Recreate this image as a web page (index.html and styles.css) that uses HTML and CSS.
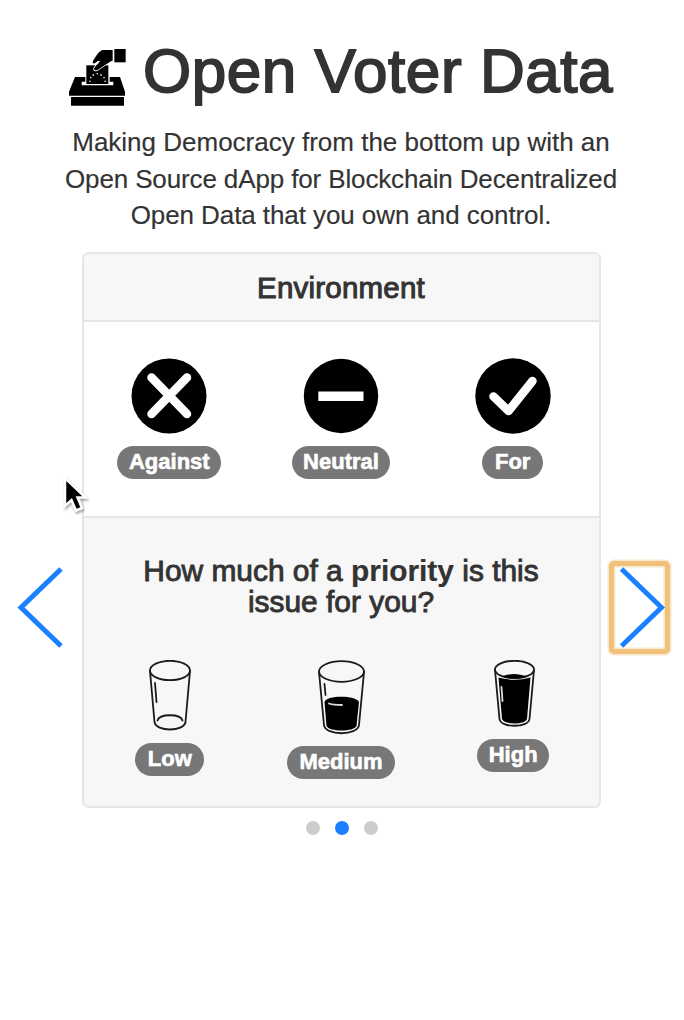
FILE: index.html
```
<!DOCTYPE html>
<html lang="en">
<head>
<meta charset="utf-8">
<title>Open Voter Data</title>
<link rel="stylesheet" href="styles.css">
</head>
<body>
<header class="masthead">
  <h1 class="title">
    <svg class="logo" viewBox="27 24 171 177" aria-hidden="true">
      <path d="M163 27h34v40h-34z"/>
      <path d="M45 111h31v14h-11v11h95v-11h-11v-14h31l15 44v12H27v-12zM33 171h159v26H33z"/>
      <path d="M79 76h66v56H79z"/>
      <path class="hand" d="M158 30h-31c-7 2-15 12-20 20-5 7-10 14-9 19 4 3 9 0 15-6h7c-3 7-18 18-18 24 1 5 7 5 12 2l27-18c6-3 9-8 17-9z"/>
      <path class="stars" d="M88 122h4v4h-4zM90 111h4v4h-4zM98 103h4v4h-4zM110 99h4v4h-4zM121 103h4v4h-4zM130 111h4v4h-4zM133 122h4v4h-4z"/>
    </svg>
    <span class="title-text">Open Voter Data</span>
  </h1>
  <p class="tagline"><span>Making Democracy from the bottom up with an</span><br><span class="tight">Open Source dApp for Blockchain Decentralized</span><br><span class="snug">Open Data that you own and control.</span></p>
</header>
<main class="carousel">
  <button class="nav prev" aria-label="Previous"><svg viewBox="0 0 52 84"><path d="M48 4 8 42.500 48 81"/></svg></button>
  <section class="card">
    <h2 class="card-head">Environment</h2>
    <div class="choices stance">
      <div class="choice"><svg width="76" height="76" viewBox="0 0 76 76"><circle cx="38" cy="38" r="37.500"/><path class="mark" d="M20.500 19.500 56 56M56 19.500 20.500 56"/></svg><span class="badge">Against</span></div>
      <div class="choice"><svg width="76" height="76" viewBox="0 0 76 76"><circle cx="38" cy="38" r="37.200"/><path class="dash" d="M15.300 33.500h45.200v9.500H15.300z"/></svg><span class="badge">Neutral</span></div>
      <div class="choice"><svg width="76" height="76" viewBox="0 0 76 76"><circle cx="38" cy="38" r="37.700"/><path class="mark" d="M18.500 38.500 33.500 53 57.500 23"/></svg><span class="badge wide">For</span></div>
    </div>
    <div class="card-foot">
      <h3 class="question">How much of a <b>priority</b> is this<br>issue for you?</h3>
      <div class="choices priority">
        <div class="choice low"><svg class="glass" width="42" height="71" viewBox="0 0 42 71"><ellipse cx="21" cy="10.500" rx="20" ry="9.700"/><path d="M1 11 5.500 62C7 72 35 72 36.500 62L41 11M8.500 60.500c2-7 23-7 25 0M6 23l1.500 19"/></svg><span class="badge wide">Low</span></div>
        <div class="choice medium"><svg class="glass" width="47" height="75" viewBox="0 0 47 75"><ellipse cx="23.500" cy="11.500" rx="22.500" ry="10.300"/><path d="M1 12 6 65C7 76 40 76 41 65L46 12M6.500 24l1 11"/><path class="liquid" d="M6.500 42C8 35 38 35 41 42L38.500 66C36 72 11 72 8.500 66z"/><path class="shine" d="M11 43.500c4 1.500 8 1.500 13 1.500"/></svg><span class="badge wide">Medium</span></div>
        <div class="choice high"><svg class="glass" width="41" height="67" viewBox="0 0 41 67"><ellipse cx="20.500" cy="9.500" rx="19.500" ry="8.700"/><path d="M1 10 5.500 59C6.500 68 34.500 68 35.500 59L40 10"/><path class="liquid" d="M4.500 17.500Q20.500 22 36.500 17.500L33 59C31 65 10 65 8 59zM8 16.500Q20.500 11.500 33 16.500 20.500 20 8 16.500z"/><path class="shine" d="M7.500 27l1 14"/></svg><span class="badge">High</span></div>
      </div>
    </div>
  </section>
  <button class="nav next" aria-label="Next"><svg viewBox="0 0 52 84"><path d="M8.500 4 48.500 42.500 8.500 81"/></svg></button>
</main>
<nav class="dots" aria-label="Slides"><i class="dot"></i><i class="dot active"></i><i class="dot"></i></nav>
<svg class="cursor" width="26" height="40" viewBox="0 0 26 40" aria-hidden="true"><path d="M3 3v28l6.500-6 4.500 10.500 6-2.500-4.500-10.500h8z"/></svg>
</body>
</html>
```
FILE: styles.css
```
* { box-sizing: border-box; }
body {
  margin: 0;
  min-height: 1020px;
  background: #fff;
  color: #333;
  font-family: "Liberation Sans", Arial, sans-serif;
  text-align: center;
}
.masthead { height: 252px; padding: 36px 2px 0 0; }
.title {
  display: flex;
  justify-content: center;
  gap: 17px;
  height: 72px;
  margin: 0;
  font-size: 62px;
  line-height: 70px;
  font-weight: 400;
  white-space: nowrap;
}
.logo { width: 57px; height: 59px; margin-top: 12px; }
.title-text { -webkit-text-stroke: 1.8px #333; letter-spacing: .55px; }
.hand { stroke: #fff; stroke-width: 5px; paint-order: stroke; }
.stars { fill: #fff; }
.tagline { margin: 16px 0 0; font-size: 26px; line-height: 36.5px; white-space: nowrap; -webkit-text-stroke: .15px #333; }
.tight { letter-spacing: -.13px; }
.snug { letter-spacing: -.08px; }
.carousel { display: flex; justify-content: space-between; padding: 0 14px 0 12px; }
.nav {
  width: 61px;
  height: 93px;
  margin-top: 309px;
  padding: 0;
  border: 5px solid transparent;
  border-radius: 5px;
  background: none;
}
.nav svg { display: block; width: 52px; height: 84px; margin-top: -1px; }
.nav path { fill: none; stroke: #1a80ff; stroke-width: 5; }
.prev svg { margin-left: -4px; }
.next { border-color: #f0c17b; box-shadow: 0 0 0 1.5px #fae6c9, inset 0 0 0 1.5px #fae6c9; }
.next svg { margin-left: -1px; }
.card {
  width: 519px;
  height: 556px;
  margin: 0;
  border: 2px solid #e6e6e6;
  border-radius: 7px;
  overflow: hidden;
}
.card-head {
  height: 68px;
  margin: 0;
  border-bottom: 2px solid #e6e6e6;
  background: #f7f7f7;
  font-size: 29.5px;
  font-weight: 400;
  line-height: 68px;
  letter-spacing: .2px;
  -webkit-text-stroke: 1px #333;
}
.choices { display: grid; grid-template-columns: repeat(3, 1fr); }
.choice { display: flex; flex-direction: column; align-items: center; }
.stance { height: 194px; padding-top: 36px; }
.mark { fill: none; stroke: #fff; stroke-width: 8.5; stroke-linecap: round; stroke-linejoin: round; }
.dash { fill: #fff; }
.badge {
  height: 33px;
  margin-top: 12px;
  padding: 0 11.5px;
  border-radius: 17px;
  background: #777;
  color: #fff;
  font-size: 22px;
  font-weight: 700;
  line-height: 32px;
  -webkit-text-stroke: .6px #fff;
}
.wide { padding: 0 12.5px; }
.card-foot { height: 290px; padding-top: 37px; border-top: 2px solid #e6e6e6; background: #f7f7f7; }
.question { height: 62px; margin: 0 0 43px; font-size: 29.9px; font-weight: 400; line-height: 31px; -webkit-text-stroke: .9px #333; }
.question b { -webkit-text-stroke: .2px #333; }
.glass { margin-left: 2px; fill: none; stroke: #1a1a1a; stroke-width: 1.8; stroke-linecap: round; }
.high .glass { margin-left: 4px; }
.low .badge, .high .badge { margin-left: 1px; }
.medium .badge { margin-top: 11px; }
.liquid { fill: #000; stroke: none; }
.shine { stroke: #ddd; }
.dots { display: flex; justify-content: center; align-items: center; gap: 15px; height: 40px; }
.dot { width: 14px; height: 14px; border-radius: 50%; background: #ccc; }
.active { background: #1a80ff; }
.cursor { position: absolute; left: 62px; top: 475px; filter: drop-shadow(1px 2px 1px #0005); }
.cursor path { fill: #000; stroke: #fff; stroke-width: 2.5; }
```
